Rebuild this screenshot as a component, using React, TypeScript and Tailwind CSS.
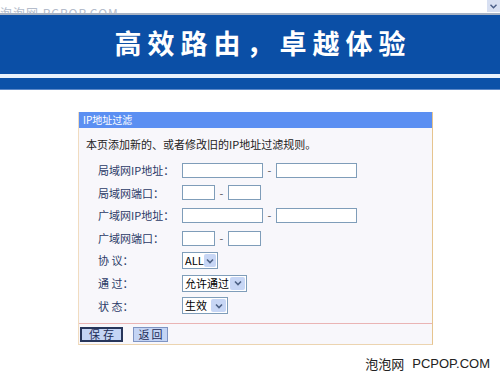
import React from 'react';

const fontCn = '"Noto Sans CJK SC", "DejaVu Sans", sans-serif';

const TextBox = ({ w }: { w: string }) => (
  <div className={`${w} h-[15px] bg-white border border-[#7f9db9]`} />
);

const Select = ({ label, w }: { label: string; w: string }) => (
  <div className={`${w} h-[17px] bg-white border border-[#7f9db9] flex items-center justify-between pl-[2px] pr-[1px]`}>
    <span className="text-[11px] leading-none text-black whitespace-nowrap">{label}</span>
    <span className="w-[15px] h-[13px] bg-[#c7d6f5] rounded-[2px] flex items-center justify-center">
      <svg width="8" height="6" viewBox="0 0 8 6">
        <path d="M1 1.5 L4 4.5 L7 1.5" stroke="#4d6185" strokeWidth="1.6" fill="none" />
      </svg>
    </span>
  </div>
);

const Row = ({ label, children }: { label: string; children: React.ReactNode }) => (
  <div className="flex items-center h-[22.6px]">
    <span className="w-[103px] shrink-0 pl-[19px] text-[11px] text-[#2b3a67] whitespace-nowrap">{label}</span>
    <div className="flex items-center">{children}</div>
  </div>
);

const Dash = ({ w }: { w: string }) => (
  <span className={`${w} text-center text-[11px] text-[#555]`}>-</span>
);

export default function App() {
  return (
    <div className="w-[500px] h-[383px] bg-white overflow-hidden relative" style={{ fontFamily: fontCn }}>
      {/* top strip */}
      <div className="h-[13px] bg-white flex justify-between relative overflow-hidden">
        <span className="text-[12px] leading-none text-[#b4bccb] mt-[7px] whitespace-nowrap tracking-[1px]">泡泡网 PCPOP.COM</span>
        <span className="w-[13px] h-[12px] bg-[#d8e0f2] flex items-center justify-center">
          <svg width="7" height="5" viewBox="0 0 7 5">
            <path d="M0.5 0.8 L3.5 3.8 L6.5 0.8" stroke="#4a5d86" strokeWidth="1.4" fill="none" />
          </svg>
        </span>
      </div>
      <div className="h-[2px] bg-[#a8b3c4]" />
      {/* banner */}
      <div className="h-[59px] bg-[#0b4fa6] flex items-center justify-center">
        <span className="text-white text-[27px] font-bold tracking-[6px] pl-[26px] pb-[2px] whitespace-nowrap">高效路由，卓越体验</span>
      </div>
      <div className="h-[4px] bg-[#eaf2fc]" />
      <div className="h-[12px] bg-[#0c51a8] border-b border-[#5c88c8]" />

      {/* panel */}
      <div className="mt-[22px] ml-[78px] w-[355px] border-r border-[#e6c48e] border-l border-l-[#f1dcc0] border-b border-b-[#ecd4b0]">
        <div className="h-[16px] bg-[#5b8ff2] flex items-center pl-[4px]">
          <span className="text-[10px] text-white leading-none">IP地址过滤</span>
        </div>
        <div className="bg-[#f8f7fb] pt-[8px] pb-[6px]">
          <div className="pl-[7px] text-[11px] text-[#222] h-[16px] flex items-center mb-[7px] whitespace-nowrap">
            本页添加新的、或者修改旧的IP地址过滤规则。
          </div>
          <Row label="局域网IP地址：">
            <TextBox w="w-[81px]" />
            <Dash w="w-[13px]" />
            <TextBox w="w-[81px]" />
          </Row>
          <Row label="局域网端口：">
            <TextBox w="w-[33px]" />
            <Dash w="w-[13px]" />
            <TextBox w="w-[33px]" />
          </Row>
          <Row label="广域网IP地址：">
            <TextBox w="w-[81px]" />
            <Dash w="w-[13px]" />
            <TextBox w="w-[81px]" />
          </Row>
          <Row label="广域网端口：">
            <TextBox w="w-[33px]" />
            <Dash w="w-[13px]" />
            <TextBox w="w-[33px]" />
          </Row>
          <Row label="协 议：">
            <Select label="ALL" w="w-[36px]" />
          </Row>
          <Row label="通 过：">
            <Select label="允许通过" w="w-[65px]" />
          </Row>
          <Row label="状 态：">
            <Select label="生效" w="w-[46px]" />
          </Row>
        </div>
        <div className="h-[1px] bg-[#eab4b4]" />
        <div className="bg-[#f8f7fb] h-[20px] flex items-center gap-[10px] pl-[1px]">
          <span className="w-[43px] h-[15px] bg-[#c4d4f4] border-2 border-[#27355a] flex items-center justify-center text-[11px] leading-none text-[#1b2a55] tracking-[3px] pl-[3px] whitespace-nowrap">保存</span>
          <span className="w-[35px] h-[15px] bg-[#c4d4f4] border border-[#7f94c2] flex items-center justify-center text-[11px] leading-none text-[#1b2a55] tracking-[2px] pl-[2px] whitespace-nowrap">返回</span>
        </div>
      </div>

      {/* watermark */}
      <div className="absolute right-[10px] bottom-[10px] text-[13px] text-[#222] flex gap-[8px]" style={{ fontFamily: '"Noto Sans CJK SC", "Liberation Sans", sans-serif' }}>
        <span>泡泡网</span>
        <span style={{ fontFamily: '"Liberation Sans", sans-serif' }}>PCPOP.COM</span>
      </div>
    </div>
  );
}
